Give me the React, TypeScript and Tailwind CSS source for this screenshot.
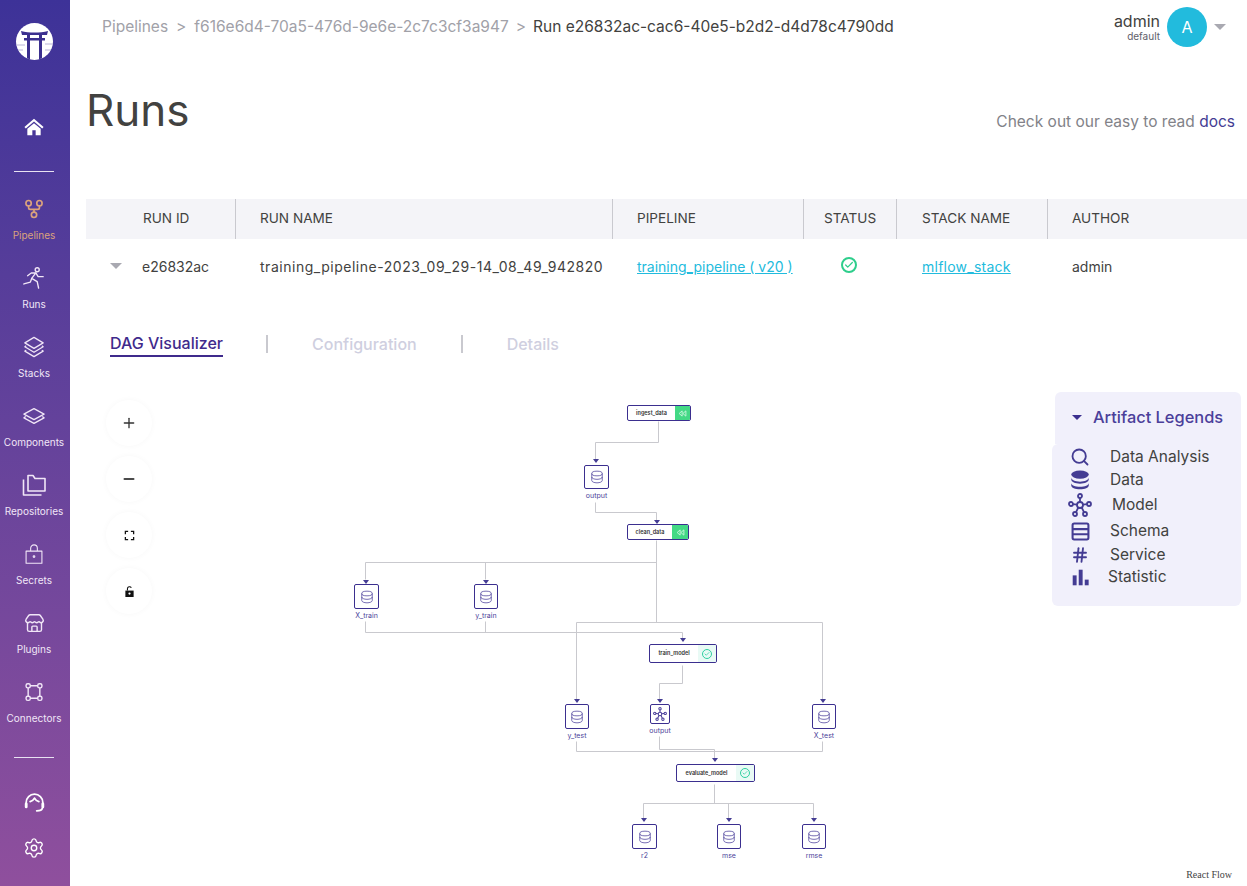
import React from 'react';
import { Check, Hash, Plus, Minus, Search, Settings, Store } from 'lucide-react';

const LINE = '#c9c9ce';
const ARROW = '#443c93';
const CANVAS_X = 70;
const CANVAS_Y = 380;

type IconProps = { className?: string };

function HomeIcon({ className }: IconProps) {
  return (
    <svg viewBox="0 0 24 24" className={className} fill="currentColor">
      <path d="M12 2 0.500 12l1.700 1.800L12 5.500l9.800 8.300 1.700-1.800z" />
      <path d="M12 7.600 4 14.200V22h6v-6h4v6h6v-7.800z" />
    </svg>
  );
}

function PipelineIcon({ className }: IconProps) {
  return (
    <svg viewBox="0 0 24 24" className={className} fill="none" stroke="currentColor" strokeWidth="2">
      <circle cx="5.500" cy="5" r="3.200" />
      <circle cx="18.500" cy="5" r="3.200" />
      <circle cx="12" cy="19" r="3.200" />
      <path d="M5.500 8.200v2.300a2 2 0 0 0 2 2h9a2 2 0 0 0 2-2V8.200M12 12.500v3.300" />
    </svg>
  );
}

function RunnerIcon({ className }: IconProps) {
  return (
    <svg viewBox="0 0 24 24" className={className} fill="none" stroke="currentColor" strokeWidth="1.500" strokeLinecap="round" strokeLinejoin="round">
      <circle cx="15.500" cy="3" r="2.200" />
      <path d="M5 9.500 9 6.500h5l-4.500 6 6 3.500 1.500 7" />
      <path d="m14 6.500 2.500 4h5.500" />
      <path d="M9.500 12.500 8 16.500 1 18.500" />
    </svg>
  );
}

function StackIcon({ className }: IconProps) {
  return (
    <svg viewBox="0 0 24 24" className={className} fill="none" stroke="currentColor" strokeWidth="1.400" strokeLinejoin="round">
      <path d="m12 1.500 10 6-10 6-10-6z" />
      <path d="m3.500 10.800-1.500 1 10 6 10-6-1.500-1" />
      <path d="m3.500 15.500-1.500 1 10 6 10-6-1.500-1" />
    </svg>
  );
}

function ComponentIcon({ className }: IconProps) {
  return (
    <svg viewBox="0 0 24 24" className={className} fill="none" stroke="currentColor" strokeWidth="1.400" strokeLinejoin="round">
      <path d="m12 4 11 6-11 6-11-6z" />
      <path d="m3 12.500-2 1.500 11 6 11-6-2-1.500" />
    </svg>
  );
}

function FolderIcon({ className }: IconProps) {
  return (
    <svg viewBox="0 0 24 24" className={className} fill="none" stroke="currentColor" strokeWidth="1.600" strokeLinejoin="round">
      <path d="M6 2.500h5l2 3h10v12.500H6z" />
      <path d="M1.500 6.500v15.500h18" />
    </svg>
  );
}

function LockIcon({ className }: IconProps) {
  return (
    <svg viewBox="0 0 24 24" className={className} fill="none" stroke="currentColor" strokeWidth="1.300" strokeLinejoin="round">
      <path d="M2.500 8.500h19V23h-19z" />
      <path d="M8 8.500V5a4 4 0 0 1 8 0v3.500" />
      <circle cx="12" cy="15" r="1" />
    </svg>
  );
}

function ConnectorIcon({ className }: IconProps) {
  return (
    <svg viewBox="0 0 24 24" className={className} fill="none" stroke="currentColor" strokeWidth="1.700">
      <rect x="2.500" y="2" width="5" height="5" rx="2" />
      <rect x="16.500" y="2" width="5" height="5" rx="2" />
      <rect x="2.500" y="17" width="5" height="5" rx="2" />
      <rect x="16.500" y="17" width="5" height="5" rx="2" />
      <path d="M7.500 4.500h9M7.500 19.500h9M5 7v10M19 7v10" />
    </svg>
  );
}

function HeadsetIcon({ className }: IconProps) {
  return (
    <svg viewBox="0 0 24 24" className={className} fill="none" stroke="currentColor" strokeWidth="2" strokeLinecap="round" strokeLinejoin="round">
      <path d="M2.500 15v-3a9.500 9.500 0 0 1 19 0v3" />
      <path d="M7 11c2-.5 4-2 5-4 1 2 3 3.500 5 4" />
      <path d="M2.500 13.500v3.500M21.500 13.500v3.500" strokeWidth="3.200" />
      <path d="M21 18.500c-.5 2-2 3-6.500 3" />
    </svg>
  );
}

function DatabaseOutline({ className }: IconProps) {
  return (
    <svg viewBox="0 0 24 24" className={className} fill="none" stroke="currentColor" strokeWidth="1.300">
      <ellipse cx="12" cy="6" rx="9" ry="4" />
      <path d="M3 6v12c0 2.200 4 4 9 4s9-1.800 9-4V6" />
      <path d="M3 12c0 2.200 4 4 9 4s9-1.800 9-4" />
    </svg>
  );
}

function DatabaseSolid({ className }: IconProps) {
  return (
    <svg viewBox="0 0 24 24" className={className} fill="currentColor">
      <ellipse cx="12" cy="5.500" rx="10.500" ry="5" />
      <path d="M1.500 9v2.500c0 2.800 4.700 5 10.500 5s10.500-2.200 10.500-5V9c0 2.800-4.700 5-10.500 5S1.500 11.800 1.500 9z" />
      <path d="M1.500 15.500v3c0 2.800 4.700 4.500 10.500 4.500s10.500-1.700 10.500-4.500v-3c0 2.800-4.700 4.500-10.500 4.500S1.500 18.300 1.500 15.500z" />
    </svg>
  );
}

function NetworkIcon({ className }: IconProps) {
  return (
    <svg viewBox="0 0 24 24" className={className} fill="none" stroke="currentColor" strokeWidth="1.800">
      <circle cx="12" cy="3" r="2" />
      <circle cx="3" cy="11" r="2" />
      <circle cx="21" cy="11" r="2" />
      <circle cx="7" cy="21" r="2" />
      <circle cx="17" cy="21" r="2" />
      <circle cx="12" cy="12" r="3" />
      <path d="M12 5v4M5 11.200l4 .5M19 11.200l-4 .5M8 19.200l2.300-4.700M16 19.200l-2.300-4.700" />
    </svg>
  );
}

function SchemaIcon({ className }: IconProps) {
  return (
    <svg viewBox="0 0 24 24" className={className} fill="none" stroke="currentColor" strokeWidth="2.600">
      <rect x="2" y="2" width="20" height="20" rx="2" />
      <path d="M2 9h20M2 15.500h20" />
    </svg>
  );
}

function BarsIcon({ className }: IconProps) {
  return (
    <svg viewBox="0 0 24 24" className={className} fill="currentColor">
      <rect x="1" y="9" width="5.500" height="14" />
      <rect x="9.500" y="1" width="5.500" height="22" />
      <rect x="18" y="15" width="5.500" height="8" />
    </svg>
  );
}

function FitIcon({ className }: IconProps) {
  return (
    <svg viewBox="0 0 24 24" className={className} fill="none" stroke="currentColor" strokeWidth="2.800">
      <path d="M3 9V3h6M15 3h6v6M21 15v6h-6M9 21H3v-6" />
    </svg>
  );
}

function OpenLockIcon({ className }: IconProps) {
  return (
    <svg viewBox="0 0 24 24" className={className} fill="currentColor">
      <path d="M3 10h18v14H3z" />
      <path d="M7.500 10V6a4.500 4.500 0 0 1 8.500-2" fill="none" stroke="currentColor" strokeWidth="2.400" />
      <circle cx="12" cy="16.500" r="2.400" fill="#fff" />
    </svg>
  );
}

function CachedIcon({ className }: IconProps) {
  return (
    <svg viewBox="0 0 24 24" className={className} fill="none" stroke="currentColor" strokeWidth="2.500" strokeLinejoin="round">
      <path d="M11 5 3 12l8 7zM21 5l-8 7 8 7z" />
    </svg>
  );
}

function Logo() {
  return (
    <div className="relative h-[37px] w-[37px] overflow-hidden rounded-full bg-white">
      <svg viewBox="0 0 37 37" className="h-full w-full">
        <path d="M5 8c8 2 19 2 27 0l-1 4H6z" fill="#3b2f8f" />
        <path d="M8 15h21v2.500H8z" fill="#3b2f8f" />
        <path d="M11 12h3v25h-3zM23 12h3v25h-3z" fill="#3b2f8f" />
        <path d="M0 22h9M0 27h7M29 21h8M29 27h8" stroke="#b9b4d8" strokeWidth="1" />
      </svg>
    </div>
  );
}

function NavItem({ icon, label, active }: { icon: React.ReactNode; label: string; active?: boolean }) {
  return (
    <div className={`flex h-[69px] flex-col items-center pt-[7px] ${active ? 'text-[#dba27c]' : 'text-[#f1e6f7]'}`}>
      <div className="flex h-[24px] w-[24px] items-center justify-center">{icon}</div>
      <span className="mt-[7px] text-[10px] leading-[14px] whitespace-nowrap">{label}</span>
    </div>
  );
}

function Sidebar() {
  return (
    <aside className="flex h-[886px] w-[70px] shrink-0 flex-col items-center bg-linear-to-b from-[#3d3298] to-[#8f4f9d] pr-[2px]">
      <div className="pt-[23px]">
        <Logo />
      </div>
      <div className="mt-[57px] text-white">
        <HomeIcon className="h-[20px] w-[20px]" />
      </div>
      <div className="mt-[34px] h-px w-[40px] bg-[#e8e2f2]" />
      <div className="mt-[18px] flex w-full flex-col">
        <NavItem active label="Pipelines" icon={<PipelineIcon className="h-[20px] w-[20px]" />} />
        <NavItem label="Runs" icon={<RunnerIcon className="h-[22px] w-[22px]" />} />
        <NavItem label="Stacks" icon={<StackIcon className="h-[22px] w-[22px]" />} />
        <NavItem label="Components" icon={<ComponentIcon className="h-[22px] w-[22px]" />} />
        <NavItem label="Repositories" icon={<FolderIcon className="h-[24px] w-[24px]" />} />
        <NavItem label="Secrets" icon={<LockIcon className="h-[20px] w-[20px]" />} />
        <NavItem label="Plugins" icon={<Store className="h-[21px] w-[21px]" strokeWidth={1.6} />} />
        <NavItem label="Connectors" icon={<ConnectorIcon className="h-[20px] w-[20px]" />} />
      </div>
      <div className="mt-[15px] h-px w-[40px] bg-[#e8e2f2]" />
      <div className="mt-[34px] text-white">
        <HeadsetIcon className="h-[21px] w-[21px]" />
      </div>
      <div className="mt-[24px] text-white">
        <Settings className="h-[22px] w-[22px]" strokeWidth={1.5} />
      </div>
    </aside>
  );
}

function TopBar() {
  return (
    <header className="flex h-[54px] items-center justify-between pl-[32px] pr-[21px] pb-[1px]">
      <div className="flex items-center text-[15.5px] text-[#a1a1a8]">
        <span>Pipelines</span>
        <span className="mx-[8px]">&gt;</span>
        <span>f616e6d4-70a5-476d-9e6e-2c7c3cf3a947</span>
        <span className="mx-[7px]">&gt;</span>
        <span className="text-[#424240]">Run e26832ac-cac6-40e5-b2d2-d4d78c4790dd</span>
      </div>
      <div className="flex items-center">
        <div className="flex flex-col items-end">
          <span className="text-[16px] leading-[16px] text-[#424240]">admin</span>
          <span className="mt-[2px] text-[10px] leading-[10px] text-[#60606a]">default</span>
        </div>
        <div className="ml-[7px] flex h-[40px] w-[40px] items-center justify-center rounded-full bg-[#22bbdd] text-[16px] text-white">
          A
        </div>
        <div className="ml-[7px] h-0 w-0 border-x-[6px] border-t-[6px] border-x-transparent border-t-[#a9a9b1]" />
      </div>
    </header>
  );
}

const columns = [
  { label: 'RUN ID', width: 'w-[150px]', pad: 'pl-[57px]' },
  { label: 'RUN NAME', width: 'w-[377px]', pad: 'pl-[24px]' },
  { label: 'PIPELINE', width: 'w-[191px]', pad: 'pl-[24px]' },
  { label: 'STATUS', width: 'w-[93px]', pad: 'pl-[20px]' },
  { label: 'STACK NAME', width: 'w-[151px]', pad: 'pl-[25px]' },
  { label: 'AUTHOR', width: 'w-[199px]', pad: 'pl-[24px]' },
];

function RunsTable() {
  return (
    <div className="ml-[16px] text-[14px]">
      <div className="flex h-[40px] bg-[#f4f4f8] text-[13.6px] text-[#424240]">
        {columns.map((c, i) => (
          <div
            key={c.label}
            className={`flex items-center pb-[2px] ${c.width} ${c.pad} ${i < columns.length - 1 ? 'border-r border-[#c9c9cf]' : ''}`}
          >
            {c.label}
          </div>
        ))}
      </div>
      <div className="flex h-[56px] items-center pb-[2px] text-[#424240]">
        <div className="flex w-[149px] items-center pl-[24px]">
          <div className="h-0 w-0 border-x-[6px] border-t-[6px] border-x-transparent border-t-[#a9a9b1]" />
          <span className="ml-[20px]">e26832ac</span>
        </div>
        <div className="w-[377px] pl-[25px] tracking-[0.52px] whitespace-nowrap">training_pipeline-2023_09_29-14_08_49_942820</div>
        <div className="w-[191px] pl-[25px] text-[#22bbdd] underline whitespace-nowrap">training_pipeline ( v20 )</div>
        <div className="flex w-[93px] pl-[38px]">
          <div className="-mt-[3px] flex h-[16px] w-[16px] items-center justify-center rounded-full border-2 border-[#2ece8c] text-[#2ece8c]">
            <Check className="h-[10px] w-[10px]" strokeWidth={3} />
          </div>
        </div>
        <div className="w-[151px] pl-[26px] tracking-[0.25px] text-[#22bbdd] underline">mlflow_stack</div>
        <div className="w-[200px] pl-[25px]">admin</div>
      </div>
    </div>
  );
}

function Tabs() {
  return (
    <div className="ml-[40px] mt-[37px] flex h-[48px] items-start text-[16px] font-medium">
      <span className="border-b-2 border-[#3f2a8c] leading-[23px] text-[#3f2a8c]">DAG Visualizer</span>
      <div className="ml-[43px] mr-[44px] mt-[3px] h-[18px] w-[2px] bg-[#c9c9cf]" />
      <span className="leading-[24px] text-[#cfcfe0]">Configuration</span>
      <div className="mx-[44px] mt-[3px] h-[18px] w-[2px] bg-[#c9c9cf]" />
      <span className="leading-[24px] text-[#cfcfe0]">Details</span>
    </div>
  );
}

const edges = [
  'M659 421V442H596V459',
  'M596 502V512H657V520',
  'M657 540V622M366 579V562H657M486 579V562',
  'M577 699V622H823V699',
  'M366 621V632H683V638M486 621V632',
  'M683 665V683H660V699',
  'M577 741V751H823V741M715 758V751',
  'M660 736V749H715V758',
  'M715 784V803M644 819V803H814V819M729 803V819',
];

const arrows: [number, number][] = [
  [596, 461], [657, 522], [366, 582], [486, 582], [683, 640], [577, 701], [660, 701], [823, 701], [715, 760], [644, 820], [729, 820], [814, 820],
];

type StepNode = { label: string; x: number; y: number; w: number; h: number; state: 'cached' | 'done'; side: number };

const steps: StepNode[] = [
  { label: 'ingest_data', x: 627, y: 405, w: 64, h: 16, state: 'cached', side: 15 },
  { label: 'clean_data', x: 627, y: 524, w: 62, h: 16, state: 'cached', side: 16 },
  { label: 'train_model', x: 649, y: 644, w: 68, h: 19, state: 'done', side: 18 },
  { label: 'evaluate_model', x: 676, y: 764, w: 79, h: 18, state: 'done', side: 18 },
];

const artifacts = [
  { label: 'output', x: 584, y: 465, w: 25, h: 24 },
  { label: 'X_train', x: 354, y: 584, w: 25, h: 25 },
  { label: 'y_train', x: 474, y: 584, w: 24, h: 25 },
  { label: 'y_test', x: 565, y: 704, w: 24, h: 25 },
  { label: 'output', x: 650, y: 704, w: 20, h: 20, model: true },
  { label: 'X_test', x: 812, y: 704, w: 24, h: 25 },
  { label: 'r2', x: 632, y: 824, w: 25, h: 25 },
  { label: 'mse', x: 717, y: 824, w: 24, h: 25 },
  { label: 'rmse', x: 802, y: 824, w: 24, h: 25 },
];

function Graph() {
  return (
    <>
      <svg className="absolute inset-0 h-full w-full" viewBox={`${CANVAS_X} ${CANVAS_Y} 1177 506`} fill="none">
        <g transform="translate(-0.5 0.5)">
          {edges.map((d) => (
            <path key={d} d={d} stroke={LINE} strokeWidth="1" />
          ))}
        </g>
        {arrows.map(([x, y]) => (
          <path key={`${x}-${y}`} d={`M${x - 3} ${y - 2}h6l-3 4z`} fill={ARROW} />
        ))}
      </svg>
      {steps.map((s) => (
        <div
          key={s.label}
          className="absolute flex items-stretch overflow-hidden rounded-[2px] border border-[#3b2f8f] bg-white"
          style={{ left: s.x - CANVAS_X, top: s.y - CANVAS_Y, width: s.w, height: s.h }}
        >
          <span className="flex flex-1 items-center justify-center text-[5.500px] font-semibold text-[#333]">{s.label}</span>
          {s.state === 'cached' ? (
            <span className="flex items-center justify-center bg-[#43d985] text-[#c9f5dc]" style={{ width: s.side }}>
              <CachedIcon className="h-[9px] w-[9px]" />
            </span>
          ) : (
            <span className="flex items-center justify-center bg-[#e9faf5]" style={{ width: s.side }}>
              <span className="flex h-[10px] w-[10px] items-center justify-center rounded-full border border-[#2ecfa0] text-[#2ecfa0]">
                <Check className="h-[6px] w-[6px]" strokeWidth={3} />
              </span>
            </span>
          )}
        </div>
      ))}
      {artifacts.map((a) => (
        <div
          key={`${a.label}-${a.x}`}
          className="absolute flex flex-col items-center"
          style={{ left: a.x - CANVAS_X, top: a.y - CANVAS_Y, width: a.w }}
        >
          <div
            className="flex items-center justify-center rounded-[2px] border border-[#3b2f8f] bg-white text-[#4b3f9a]"
            style={{ width: a.w, height: a.h }}
          >
            {a.model ? <NetworkIcon className="h-[14px] w-[14px]" /> : <DatabaseOutline className="h-[14px] w-[14px]" />}
          </div>
          <span className="mt-[2px] text-[7px] leading-[10px] whitespace-nowrap text-[#4b3f9a]">{a.label}</span>
        </div>
      ))}
    </>
  );
}

function FlowControls() {
  const items = [
    <Plus key="plus" className="h-[16px] w-[16px] text-[#333]" strokeWidth={2} />,
    <Minus key="minus" className="h-[16px] w-[16px] text-[#111]" strokeWidth={2.500} />,
    <FitIcon key="fit" className="h-[11px] w-[11px] text-[#111]" />,
    <OpenLockIcon key="lock" className="h-[11px] w-[11px] text-[#111]" />,
  ];
  return (
    <div className="absolute left-[36px] top-[20px] flex flex-col gap-[10px]">
      {items.map((icon, i) => (
        <div key={i} className="flex h-[46px] w-[46px] items-center justify-center rounded-full bg-white shadow-[0_0_6px_rgba(0,0,0,0.03)]">
          {icon}
        </div>
      ))}
    </div>
  );
}

const legend = [
  { label: 'Data Analysis', icon: <Search className="h-[20px] w-[20px]" strokeWidth={2.200} />, h: 'h-[24px]', ml: 'ml-[18px]' },
  { label: 'Data', icon: <DatabaseSolid className="h-[20px] w-[20px]" />, h: 'h-[22px]', ml: 'ml-[18px]' },
  { label: 'Model', icon: <NetworkIcon className="h-[24px] w-[24px]" />, h: 'h-[28px]', ml: 'ml-[20px]' },
  { label: 'Schema', icon: <SchemaIcon className="h-[19px] w-[19px]" />, h: 'h-[24px]', ml: 'ml-[18px]' },
  { label: 'Service', icon: <Hash className="h-[18px] w-[18px]" strokeWidth={2.500} />, h: 'h-[24px]', ml: 'ml-[18px]' },
  { label: 'Statistic', icon: <BarsIcon className="h-[17px] w-[17px]" />, h: 'h-[20px]', ml: 'ml-[16px]' },
];

function LegendPanel() {
  return (
    <div className="absolute left-[982px] top-[12px] w-[189px] text-[15.5px]">
      <div className="ml-[3px] flex h-[52px] items-center rounded-t-[6px] bg-[#f1f0fb] pb-[2px] pl-[17px] text-[#4b3f9a]">
        <div className="h-0 w-0 border-x-[5px] border-t-[5px] border-x-transparent border-t-[#3b2f8f]" />
        <span className="ml-[11px] text-[16.4px] font-medium">Artifact Legends</span>
      </div>
      <div className="flex h-[162px] flex-col rounded-b-[6px] rounded-tl-[6px] bg-[#f1f0fb] pl-[16px] pt-[1px]">
        {legend.map((l) => (
          <div key={l.label} className={`flex items-center ${l.h}`}>
            <div className="flex w-[24px] justify-center text-[#443c93]">{l.icon}</div>
            <span className={`${l.ml} text-[#424240]`}>{l.label}</span>
          </div>
        ))}
      </div>
    </div>
  );
}

export default function App() {
  return (
    <div className="flex h-[886px] w-[1247px] overflow-hidden bg-white font-['Inter',sans-serif]">
      <Sidebar />
      <main className="min-w-0 flex-1">
        <TopBar />
        <div className="flex h-[145px] items-start justify-between pl-[16px] pr-[12px]">
          <h1 className="mt-[30px] text-[44px] leading-[52px] font-normal text-[#424240]">Runs</h1>
          <p className="mt-[57px] text-[15.5px] leading-[22px] text-[#828288]">
            Check out our easy to read <span className="text-[#443c93]">docs</span>
          </p>
        </div>
        <RunsTable />
        <Tabs />
        <div className="relative h-[506px]">
          <Graph />
          <FlowControls />
          <LegendPanel />
          <span className="absolute bottom-[4px] right-[15px] font-['Liberation_Serif',serif] text-[10px] text-[#444]">React Flow</span>
        </div>
      </main>
    </div>
  );
}
